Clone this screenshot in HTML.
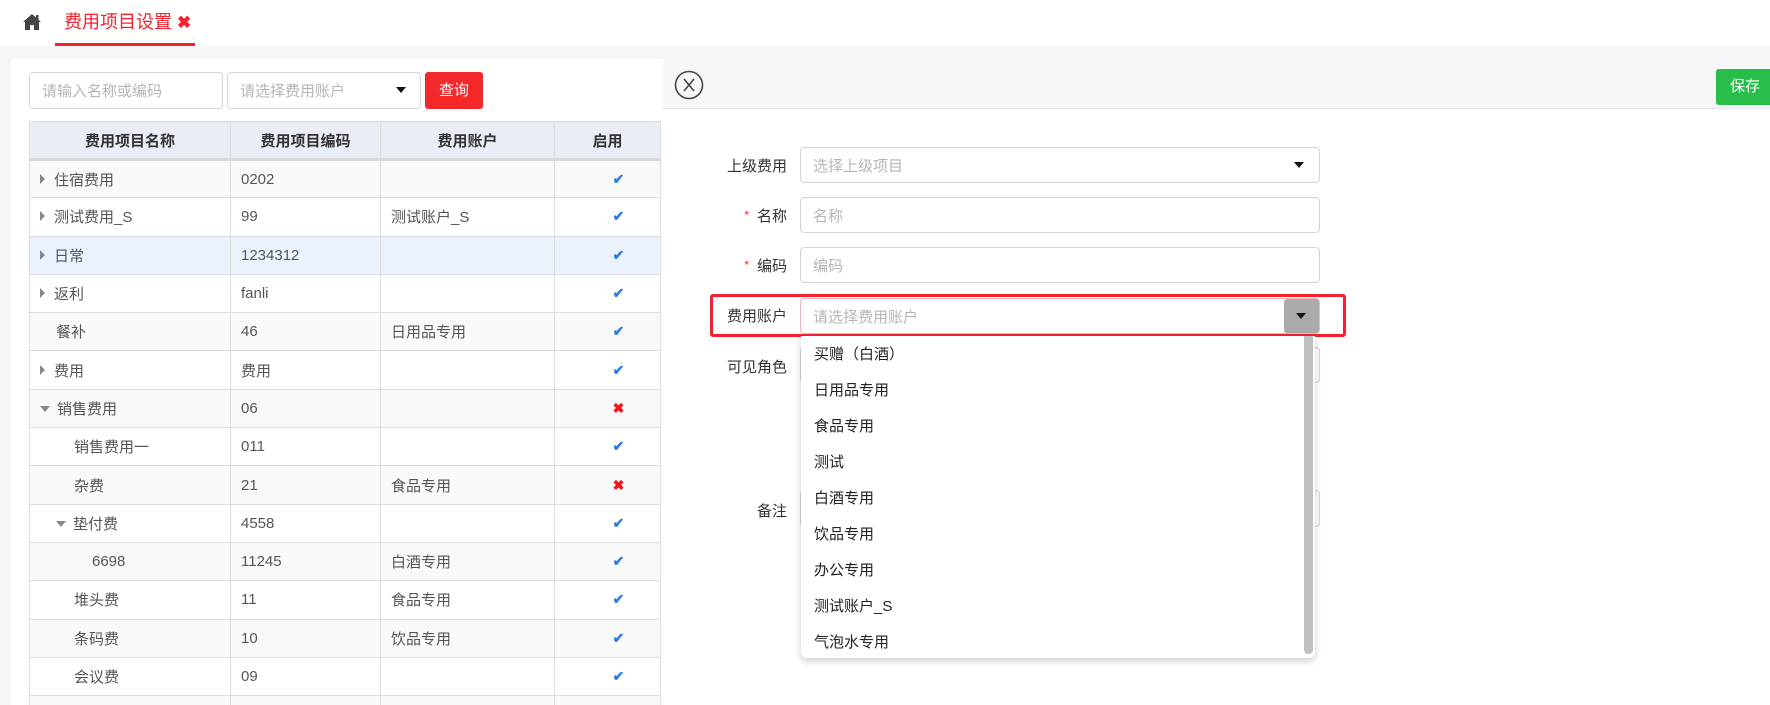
<!DOCTYPE html>
<html style="width:1770px;height:705px;overflow:hidden"><head><meta charset="utf-8">
<style>
*{box-sizing:border-box;margin:0;padding:0}
body{width:1770px;height:705px;overflow:hidden;background:#f5f6f9;font-family:"Liberation Sans","Noto Sans CJK SC",sans-serif;color:#333;position:relative}
.abs{position:absolute}
.top{left:0;top:0;width:1770px;height:46px;background:#fff}
.tab{left:55px;top:0;width:140px;height:46px;border-bottom:3px solid #f5222d;color:#f5222d;font-size:18px;line-height:44px;padding-left:9px}
.lp{left:11px;top:59px;width:652px;height:646px;background:#fff;overflow:hidden}
.inp{border:1px solid #d5d5d5;border-radius:4px;background:#fff;color:#b5b5b5;font-size:15px;padding-left:12px}
table{border-collapse:collapse;position:absolute;left:18px;top:62px;width:632px;font-size:15px}
td,th{border:1px solid #ddd;height:38.3px;padding:0}
th{background:#e9edf5;font-weight:bold;color:#333;height:38px;border-bottom:3px solid #d8d8d8}
td{color:#555;padding-left:10px}
tr:nth-child(even) td{background:#f9f9f9}
tr.hl td{background:#eaf3fd}
.ar{display:inline-block;width:0;height:0;border-top:5px solid transparent;border-bottom:5px solid transparent;border-left:5px solid #888;margin-right:9px;vertical-align:1px}
.dn{display:inline-block;width:0;height:0;border-left:5px solid transparent;border-right:5px solid transparent;border-top:6px solid #888;margin-right:7px;vertical-align:2px}
td.c{text-align:center;padding:0 0 0 22px;color:#2d7be5;font-size:14px;font-weight:bold}
td.x{color:#f0161b}
.rp{left:663px;top:59px;width:1107px;height:646px;background:#fff}
.rh{left:663px;top:59px;width:1107px;height:50px;background:#f7f7f7;border-bottom:1px solid #e6e6e6}
.lbl{font-size:15px;color:#333;text-align:right;width:120px;left:667px}
.lbl i{color:#f5222d;font-style:normal;font-size:12px;margin-right:8px;vertical-align:2px}
.fi{left:800px;width:520px;height:36px;line-height:38px}
.tri{width:0;height:0;border-left:5px solid transparent;border-right:5px solid transparent;border-top:6px solid #111}
.dd{left:801px;top:336px;width:514px;height:322px;background:#fff;border-radius:0 0 6px 6px;box-shadow:0 3px 8px rgba(0,0,0,.2)}
.it{position:absolute;left:13px;font-size:15px;color:#222}
</style></head><body>
<div class="abs top"></div>
<svg class="abs" style="left:22px;top:13px" width="20" height="18" viewBox="0 0 20 18"><path d="M10 1 L1 9 L3 9 L3 17 L8 17 L8 12 L12 12 L12 17 L17 17 L17 9 L19 9 Z" fill="#444"/><rect x="14" y="2" width="2.5" height="5" fill="#444"/></svg>
<div class="abs tab">费用项目设置 <span style="font-weight:bold;font-size:17px">✖</span></div>
<div class="abs lp">
<table>
<tr><th style="width:201px">费用项目名称</th><th style="width:150px">费用项目编码</th><th style="width:174px">费用账户</th><th>启用</th></tr>
<tr><td><span class="ar"></span>住宿费用</td><td>0202</td><td></td><td class="c">✔</td></tr>
<tr><td><span class="ar"></span>测试费用_S</td><td>99</td><td>测试账户_S</td><td class="c">✔</td></tr>
<tr class="hl"><td><span class="ar"></span>日常</td><td>1234312</td><td></td><td class="c">✔</td></tr>
<tr><td><span class="ar"></span>返利</td><td>fanli</td><td></td><td class="c">✔</td></tr>
<tr><td style="padding-left:26px">餐补</td><td>46</td><td>日用品专用</td><td class="c">✔</td></tr>
<tr><td><span class="ar"></span>费用</td><td>费用</td><td></td><td class="c">✔</td></tr>
<tr><td><span class="dn"></span>销售费用</td><td>06</td><td></td><td class="c x">✖</td></tr>
<tr><td style="padding-left:44px">销售费用一</td><td>011</td><td></td><td class="c">✔</td></tr>
<tr><td style="padding-left:44px">杂费</td><td>21</td><td>食品专用</td><td class="c x">✖</td></tr>
<tr><td style="padding-left:26px"><span class="dn"></span>垫付费</td><td>4558</td><td></td><td class="c">✔</td></tr>
<tr><td style="padding-left:62px">6698</td><td>11245</td><td>白酒专用</td><td class="c">✔</td></tr>
<tr><td style="padding-left:44px">堆头费</td><td>11</td><td>食品专用</td><td class="c">✔</td></tr>
<tr><td style="padding-left:44px">条码费</td><td>10</td><td>饮品专用</td><td class="c">✔</td></tr>
<tr><td style="padding-left:44px">会议费</td><td>09</td><td></td><td class="c">✔</td></tr>
<tr><td></td><td></td><td></td><td class="c"></td></tr>
</table>
</div>
<div class="abs inp" style="left:29px;top:72px;width:194px;height:37px;line-height:37px">请输入名称或编码</div>
<div class="abs inp" style="left:227px;top:72px;width:194px;height:37px;line-height:37px">请选择费用账户</div>
<div class="abs tri" style="left:396px;top:87px"></div>
<div class="abs" style="left:425px;top:72px;width:58px;height:37px;background:#f5282a;border-radius:3px;color:#fff;font-size:15px;line-height:37px;text-align:center">查询</div>
<div class="abs rp"></div>
<div class="abs rh"></div>
<svg class="abs" style="left:674px;top:70px" width="30" height="30" viewBox="0 0 30 30"><circle cx="15" cy="15" r="13.5" fill="none" stroke="#444" stroke-width="1.6"/><path d="M10 9 L20 21 M20 9 L10 21" stroke="#444" stroke-width="1.6"/></svg>
<div class="abs" style="left:1716px;top:69px;width:60px;height:36px;background:#27be4a;border-radius:3px;color:#fff;font-size:15px;line-height:36px;padding-left:14px">保存</div>
<div class="abs lbl" style="top:155px">上级费用</div>
<div class="abs inp fi" style="top:147px">选择上级项目</div>
<div class="abs tri" style="left:1294px;top:162px"></div>
<div class="abs lbl" style="top:205px"><i>*</i>名称</div>
<div class="abs inp fi" style="top:197px">名称</div>
<div class="abs lbl" style="top:255px"><i>*</i>编码</div>
<div class="abs inp fi" style="top:247px">编码</div>
<div class="abs lbl" style="top:356px">可见角色</div>
<div class="abs inp fi" style="top:347px"></div>
<div class="abs lbl" style="top:500px">备注</div>
<div class="abs inp fi" style="top:490px;height:37px"></div>
<div class="abs" style="left:710px;top:294px;width:636px;height:43px;border:3px solid #f5222d;border-radius:3px"></div>
<div class="abs lbl" style="top:305px">费用账户</div>
<div class="abs inp fi" style="top:298px;border-color:#f3b5b5">请选择费用账户</div>
<div class="abs" style="left:1284px;top:299px;width:35px;height:34px;background:#aaa;border-radius:3px"></div>
<div class="abs tri" style="left:1296px;top:313px"></div>
<div class="dd abs">
<div class="it" style="top:7px">买赠（白酒）</div>
<div class="it" style="top:43px">日用品专用</div>
<div class="it" style="top:79px">食品专用</div>
<div class="it" style="top:115px">测试</div>
<div class="it" style="top:151px">白酒专用</div>
<div class="it" style="top:187px">饮品专用</div>
<div class="it" style="top:223px">办公专用</div>
<div class="it" style="top:259px">测试账户_S</div>
<div class="it" style="top:295px">气泡水专用</div>
<div class="abs" style="left:503px;top:0;width:9px;height:318px;background:#c1c1c1;border-radius:0 0 4px 4px"></div>
</div>
</body></html>
